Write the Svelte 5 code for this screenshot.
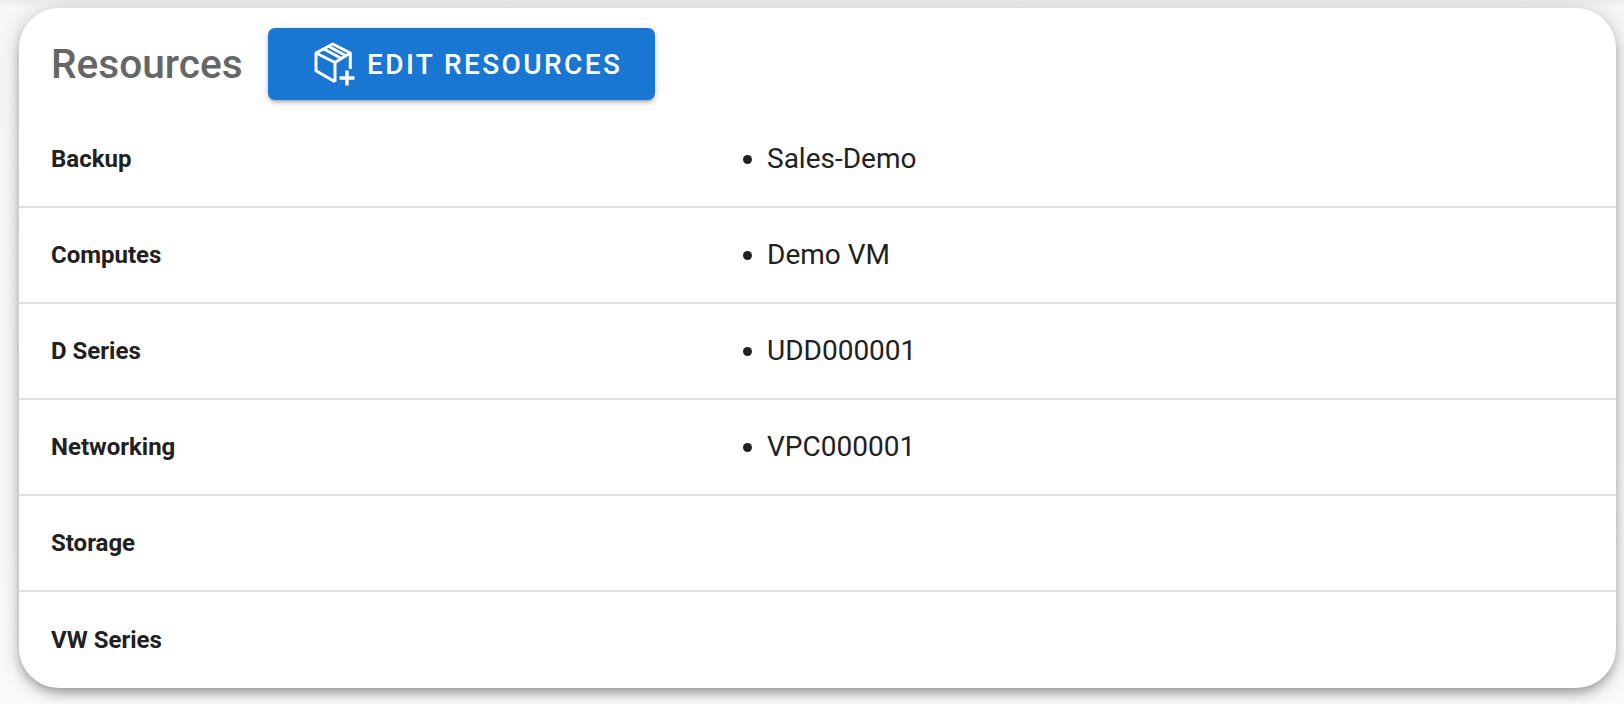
<script>
  const rows = [
    { name: "Backup", items: ["Sales-Demo"] },
    { name: "Computes", items: ["Demo VM"] },
    { name: "D Series", items: ["UDD000001"] },
    { name: "Networking", items: ["VPC000001"] },
    { name: "Storage", items: [] },
    { name: "VW Series", items: [] },
  ];
</script>

<div class="page">
  <section class="card">
    <header class="card-head">
      <h2>Resources</h2>
      <button class="edit-btn" type="button">
        <svg width="44" height="46" viewBox="22 12 44 46" fill="none" stroke="#fff" stroke-width="3" stroke-linejoin="round">
          <path d="M59.300 40V24L41.700 15 25 24v17.700L44 52.700" />
          <path d="M25 24l19 9.500 15.300-9.500M44 33.500v19.200" />
          <path d="M32 19.500 50 29.300M37 17 55 26.700" />
          <path d="M56 41.500v15M48.500 49h15" stroke-width="3.400" />
        </svg>
        <span>Edit Resources</span>
      </button>
    </header>
    {#each rows as row}
      <div class="row">
        <div class="row-name">{row.name}</div>
        <div class="row-items">
          {#if row.items.length}
            <ul>
              {#each row.items as item}
                <li>{item}</li>
              {/each}
            </ul>
          {/if}
        </div>
      </div>
    {/each}
  </section>
</div>

<style>
  :global(body) {
    background: #fafafa;
    font-family: Roboto, "Liberation Sans", sans-serif;
  }

  .page {
    height: 704px;
    box-sizing: border-box;
    padding: 8px 8px 16px 19px;
    background: linear-gradient(#ededed, #f7f7f7 8px, #fafafa);
    overflow: hidden;
  }

  .card {
    height: 680px;
    box-sizing: border-box;
    background: #fff;
    border-radius: 40px;
    box-shadow: 0 6px 12px -2px rgba(0, 0, 0, 0.35), 0 2px 24px rgba(0, 0, 0, 0.16);
    overflow: hidden;
  }

  .card-head {
    height: 104px;
    display: flex;
    align-items: center;
    gap: 26px;
    padding: 20px 0 12px 32px;
    box-sizing: border-box;
  }

  h2 {
    margin: 0;
    width: 191px;
    font-size: 40.6px;
    font-weight: 500;
    line-height: 56px;
    white-space: nowrap;
    color: #666;
  }

  .edit-btn {
    width: 387px;
    height: 72px;
    display: flex;
    align-items: center;
    gap: 10px;
    border: none;
    border-radius: 7px;
    background: #1976d2;
    color: #fff;
    font: 500 28px Roboto, sans-serif;
    letter-spacing: 2.4px;
    text-transform: uppercase;
    box-shadow: 0 3px 3px -2px rgba(0, 0, 0, 0.2), 0 3px 4px rgba(0, 0, 0, 0.14), 0 1px 8px rgba(0, 0, 0, 0.12);
    padding: 0 0 0 45px;
  }

  .row {
    height: 96px;
    display: grid;
    grid-template-columns: 660px 1fr;
    align-items: center;
    padding-left: 32px;
    box-sizing: border-box;
    border-bottom: 2px solid #e0e0e0;
    color: #212121;
  }

  .row:last-of-type {
    border-bottom: none;
  }

  .row-name {
    font-size: 24px;
    font-weight: 700;
  }

  ul {
    margin: 0;
    padding: 0 0 0 56px;
  }

  li {
    font-size: 28px;
    line-height: 36px;
  }
</style>
